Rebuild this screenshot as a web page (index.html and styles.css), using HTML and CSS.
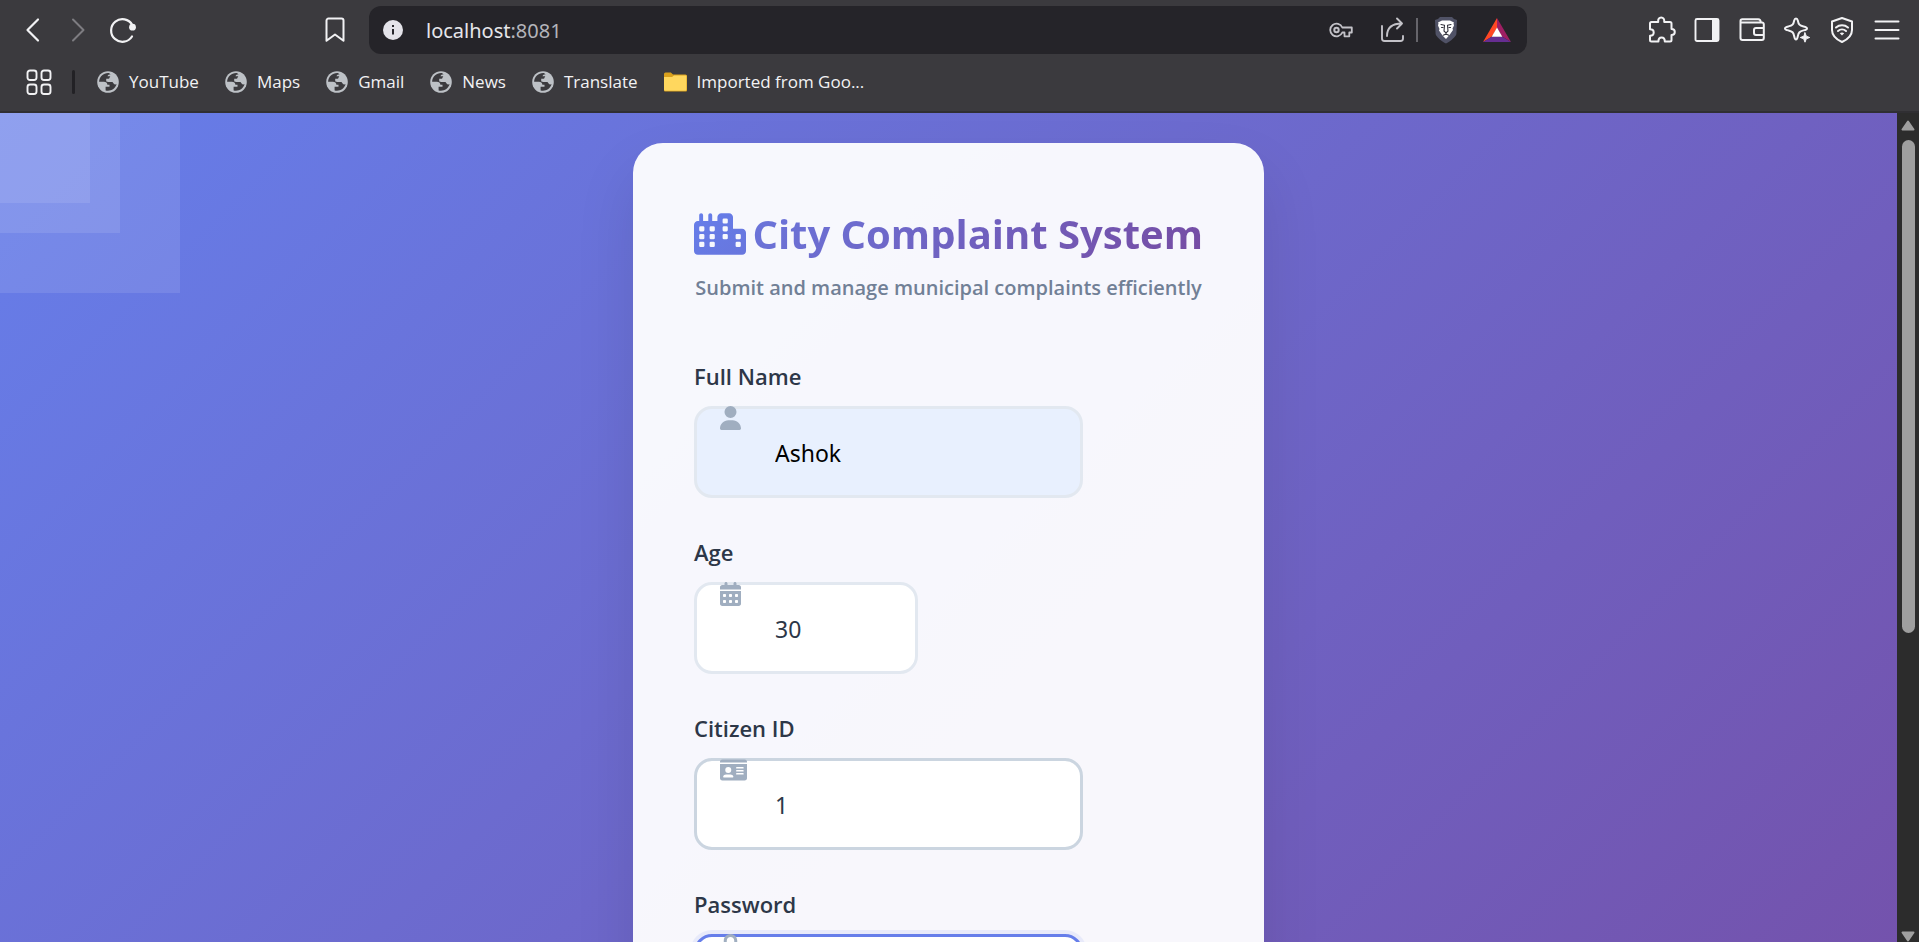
FILE: index.html
```
<!DOCTYPE html>
<html lang="en">
<head>
<meta charset="utf-8">
<meta name="viewport" content="width=device-width, initial-scale=1">
<title>City Complaint System</title>
<link rel="stylesheet" href="styles.css">
</head>
<body>
<svg class="defs" width="0" height="0" aria-hidden="true">
  <symbol id="globe" viewBox="0 0 22 22">
    <circle cx="11" cy="11" r="10.8" fill="#bdc1c6"/>
    <path d="M12 2.1C6.8 1.600 2.300 5.700 2.100 10.700l4.800.1c2 0 3.400 1 3.500 2.900l2.100.1v2H8.600v3.700c4.600 1.300 9.700-1.300 11-6.400-1 .6-2.300.5-2.900-.9-.4-1-1.300-1.300-2.500-1.300H10.400V8.100c1.300.1 2.100-.4 2.200-1.600.1-1.100 1-1.700 2.600-1.600z" fill="#3b3a3e"/>
    <path d="M10.500 5.200h2.800v1.200c0 .8-.6 1.400-1.500 1.400H9.200v2.700h5c1.500 0 2.300.8 2.400 2.100l3.100.6c.8-3.600-.7-7.400-4.200-9.500l-1.500-.5c-1.900-.1-3.300.6-3.500 2z" fill="#bdc1c6"/>
  </symbol>
</svg>
<header class="browser">
  <div class="toolbar">
    <nav class="group" aria-label="Navigation">
      <button class="tool" aria-label="Back"><svg width="26" height="26" viewBox="0 0 26 26"><path d="M18 2.500 7.500 13 18 23.500" stroke-width="2.200"/></svg></button>
      <button class="tool dim" aria-label="Forward"><svg width="26" height="26" viewBox="0 0 26 26"><path d="M8 2.500 18.500 13 8 23.500" stroke-width="2"/></svg></button>
      <button class="tool" aria-label="Reload"><svg width="28" height="28" viewBox="0 0 28 28"><path d="M23 20.500A11.300 11.300 0 1 1 23.300 9" stroke-width="2.200"/><circle cx="23.500" cy="11.200" r="3.400" fill="#f2f2f4" stroke="none"/></svg></button>
    </nav>
    <div class="location">
      <button class="tool" aria-label="Bookmark this page"><svg width="24" height="28" viewBox="0 0 24 28"><path d="M5.500 2.500h13a2 2 0 0 1 2 2v20.300L12 18.500l-8.500 6.300V4.500a2 2 0 0 1 2-2z" stroke-width="2"/></svg></button>
      <div class="url">
        <svg width="20" height="20" viewBox="0 0 20 20" aria-hidden="true"><circle cx="10" cy="10" r="10" fill="#e4e3e9"/><path d="M10 9v5.500M10 5v2" stroke="#27262b" stroke-width="2"/></svg>
        <span class="address">localhost<span class="port">:8081</span></span>
        <button class="tool soft" aria-label="Passwords"><svg width="24" height="18" viewBox="0 0 24 18"><path d="M13.300 6.500a6.300 6.300 0 1 0 0 5h2.200v3.800h4.800v-3.800h2.500v-5z" stroke-width="1.800"/><circle cx="7.500" cy="9" r="2.200" stroke-width="2"/></svg></button>
        <button class="tool soft share" aria-label="Share"><svg width="24" height="26" viewBox="0 0 24 26"><path d="M2 9v12.500a2.500 2.500 0 0 0 2.500 2.500h16a2.500 2.500 0 0 0 2.500-2.500V19M7 19c0-8 5-12.500 15-12.500M17 1.500l5 5-5 5" stroke-width="1.900"/></svg></button>
        <span class="bar"></span>
        <button class="tool" aria-label="Shields"><svg width="24" height="28" viewBox="0 0 24 28"><path d="M6 1h12l2 2 3 1-.6 14c-.4 2-5 7-10.400 9.500C6.600 25 2 20 1.600 18L1 4l3-1z" fill="#505266" stroke="none"/><path d="M8 4.500h8l4 2-.5 1 .5 2-1.500 3 .5 1.500-3.500 5L12 23l-3.500-3.500-3.500-5 .5-1.500L4 9.500l.5-2-.5-1z" fill="#fff" stroke="none"/><path d="M7 8.500l3.500.8L10 15l2 1.800 2-1.800-.5-5.700 3.500-.8M12 17v1.500M7.500 11.500h1.500M16.500 11.500H15M9.200 19.200l2.800-1.200 2.800 1.200" stroke="#34343e" stroke-width="1.100"/></svg></button>
        <button class="tool rewards" aria-label="Rewards"><svg width="28" height="24" viewBox="0 0 28 24"><path d="M14 0 0 24l9-5.500 5-8.500z" fill="#ff4724" stroke="none"/><path d="m14 0 14 24-9-5.500L14 10z" fill="#9e1f63" stroke="none"/><path d="M0 24h28l-9-5.500H9z" fill="#662d91" stroke="none"/><path d="m14 9.500 5.300 9.200H8.700z" fill="#fff" stroke="none"/></svg></button>
      </div>
    </div>
    <div class="group">
      <button class="tool" aria-label="Extensions"><svg width="28" height="28" viewBox="0 0 28 28"><path d="M3.500 6h6.700c-.4-3 1-4.500 3-4.500s3.400 1.500 3 4.500H22a1.500 1.500 0 0 1 1.500 1.500v5.600c2.200 0 3.300 1.200 3.300 2.900s-1.100 2.900-3.300 2.900V24a1.500 1.500 0 0 1-1.500 1.500h-5.200c0-2.600-1.200-4-3.200-4s-3.200 1.400-3.200 4H3.500A1.500 1.500 0 0 1 2 24v-4.300c2.400 0 3.700-1.200 3.700-3.200S4.400 13.300 2 13.300V7.500A1.500 1.500 0 0 1 3.500 6z" stroke-width="2"/></svg></button>
      <button class="tool" aria-label="Sidebar"><svg width="26" height="26" viewBox="0 0 26 26"><rect x="1.500" y="2" width="23" height="22" rx="1.500" stroke-width="1.900"/><path d="M18 2h7v22h-7z" fill="#f2f2f4" stroke="none"/></svg></button>
      <button class="tool" aria-label="Wallet"><svg width="28" height="26" viewBox="0 0 28 26"><path d="M2.500 5.500V4A1.800 1.800 0 0 1 4.300 2.200H20A2.500 2.500 0 0 1 22.500 5.500M2.500 5.500H24A1.800 1.800 0 0 1 25.800 7.300V21A2 2 0 0 1 23.800 23H4.500A2 2 0 0 1 2.500 21zM25.800 11H18a2 2 0 0 0-2 2v3a2 2 0 0 0 2 2h7.800" stroke-width="2"/></svg></button>
      <button class="tool" aria-label="Assistant"><svg width="28" height="28" viewBox="0 0 28 28"><path d="M13 2.500c1.100 0 1.500.8 1.800 2 .8 4 1.700 5 5.700 5.900 1.700.4 3.500.8 3.500 2s-1.800 1.600-3.500 2c-4 .9-4.900 1.900-5.700 5.900-.3 1.500-.7 3.200-1.800 3.200s-1.500-1.700-1.800-3.200c-.8-4-1.700-5-5.700-5.900-1.700-.4-3.500-.8-3.500-2s1.800-1.600 3.500-2c4-.9 4.900-1.900 5.700-5.900.3-1.200.7-2 1.800-2z" stroke-width="2"/><path d="M22 16.800l1.300 3.400 3.400 1.300-3.400 1.300L22 26.200l-1.300-3.400-3.400-1.300 3.400-1.300z" fill="#f2f2f4" stroke-width="1"/></svg></button>
      <button class="tool" aria-label="VPN"><svg width="24" height="28" viewBox="0 0 24 28"><path d="M12 2 22 5.500V14c0 5-4.500 9.500-10 12C6.500 23.500 2 19 2 14V5.500z" stroke-width="2"/><path d="M6 11.500c3.500-3 8.500-3 12 0M8 15c2.300-2 5.700-2 8 0" stroke-width="2"/><path d="m9.800 17.200 2.200 2.400 2.200-2.400c-1.400-1-3-1-4.400 0z" fill="#f2f2f4" stroke="none"/></svg></button>
      <button class="tool" aria-label="Menu"><svg width="26" height="26" viewBox="0 0 26 26"><path d="M1.500 4.500h23M1.500 13h23M1.500 21.500h23" stroke-width="2"/></svg></button>
    </div>
  </div>
  <nav class="bookmarks" aria-label="Bookmarks">
    <button class="tool apps" aria-label="Apps"><svg width="26" height="26" viewBox="0 0 26 26"><rect x="1.500" y="1.500" width="9" height="9.500" rx="2.500" stroke-width="1.900"/><rect x="15.500" y="1.500" width="9" height="9.500" rx="2.500" stroke-width="1.900"/><rect x="1.500" y="15.500" width="9" height="9.500" rx="2.500" stroke-width="1.900"/><rect x="15.500" y="15.500" width="9" height="9.500" rx="2.500" stroke-width="1.900"/></svg></button>
    <span class="split"></span>
    <a href="#"><svg width="22" height="22"><use href="#globe"/></svg>YouTube</a>
    <a href="#"><svg width="22" height="22"><use href="#globe"/></svg>Maps</a>
    <a href="#"><svg width="22" height="22"><use href="#globe"/></svg>Gmail</a>
    <a href="#"><svg width="22" height="22"><use href="#globe"/></svg>News</a>
    <a href="#"><svg width="22" height="22"><use href="#globe"/></svg>Translate</a>
    <a href="#"><svg width="23" height="20" viewBox="0 0 23 20"><path d="M0 2a1.500 1.500 0 0 1 1.500-1.500h5.300L9 2.500h12.500A1.500 1.500 0 0 1 23 4v14.500a1 1 0 0 1-1 1H1a1 1 0 0 1-1-1z" fill="#d9a01c"/><path d="M0 5h8l2-1.500h12.500V17.500a1.200 1.200 0 0 1-1.200 1.200H1.200A1.200 1.200 0 0 1 0 17.500z" fill="#ffd75e"/></svg>Imported from Goo...</a>
  </nav>
</header>

<div class="viewport">
  <main class="page">
    <div class="shade large"></div>
    <div class="shade medium"></div>
    <div class="shade small"></div>
    <section class="card">
      <h1>
        <svg width="52" height="42" viewBox="0 0 640 512" aria-hidden="true"><defs><linearGradient id="city" x1="0" y1="0" x2="1" y2="1"><stop offset="0" stop-color="#667eea"/><stop offset="1" stop-color="#6876dd"/></linearGradient></defs><path fill="url(#city)" fill-rule="evenodd" d="M480 48c0-26.500-21.500-48-48-48H336c-26.500 0-48 21.500-48 48V96H224V24c0-13.300-10.700-24-24-24s-24 10.700-24 24V96H112V24c0-13.300-10.700-24-24-24S64 10.700 64 24V96H48C21.500 96 0 117.500 0 144V464c0 26.500 21.500 48 48 48H592c26.500 0 48-21.500 48-48V240c0-26.500-21.500-48-48-48H480zM80 160h32q16 0 16 16v32q0 16-16 16H80q-16 0-16-16v-32q0-16 16-16zm0 96h32q16 0 16 16v32q0 16-16 16H80q-16 0-16-16v-32q0-16 16-16zm0 96h32q16 0 16 16v32q0 16-16 16H80q-16 0-16-16v-32q0-16 16-16zM208 160h32q16 0 16 16v32q0 16-16 16h-32q-16 0-16-16v-32q0-16 16-16zm0 96h32q16 0 16 16v32q0 16-16 16h-32q-16 0-16-16v-32q0-16 16-16zm0 96h32q16 0 16 16v32q0 16-16 16h-32q-16 0-16-16v-32q0-16 16-16zM368 64h32q16 0 16 16v32q0 16-16 16h-32q-16 0-16-16V80q0-16 16-16zm0 96h32q16 0 16 16v32q0 16-16 16h-32q-16 0-16-16v-32q0-16 16-16zm0 96h32q16 0 16 16v32q0 16-16 16h-32q-16 0-16-16v-32q0-16 16-16zM528 256h32q16 0 16 16v32q0 16-16 16h-32q-16 0-16-16v-32q0-16 16-16zm0 96h32q16 0 16 16v32q0 16-16 16h-32q-16 0-16-16v-32q0-16 16-16z"/></svg>
        <span class="title">City Complaint System</span>
      </h1>
      <p class="tagline">Submit and manage municipal complaints efficiently</p>
      <form>
        <div class="field">
          <label for="name">Full Name</label>
          <div class="control">
            <input class="filled" id="name" type="text" value="Ashok">
            <svg class="mark" height="24" viewBox="0 0 448 512" aria-hidden="true"><path d="M224 256A128 128 0 1 0 224 0a128 128 0 1 0 0 256zm-45.700 48C79.800 304 0 383.800 0 482.300C0 498.700 13.300 512 29.700 512H418.300c16.400 0 29.700-13.300 29.700-29.700C448 383.800 368.200 304 269.700 304H178.300z"/></svg>
          </div>
        </div>
        <div class="field">
          <label for="age">Age</label>
          <div class="control short">
            <input id="age" type="text" inputmode="numeric" value="30">
            <svg class="mark" height="24" viewBox="0 0 448 512" aria-hidden="true"><path d="M128 0c17.700 0 32 14.300 32 32V64H288V32c0-17.700 14.300-32 32-32s32 14.300 32 32V64h48c26.500 0 48 21.500 48 48v48H0V112C0 85.500 21.500 64 48 64H96V32c0-17.700 14.300-32 32-32zM0 192H448V464c0 26.500-21.500 48-48 48H48c-26.500 0-48-21.500-48-48V192zm64 80v32c0 8.800 7.200 16 16 16h32c8.800 0 16-7.200 16-16V272c0-8.800-7.200-16-16-16H80c-8.800 0-16 7.200-16 16zm128 0v32c0 8.800 7.200 16 16 16h32c8.800 0 16-7.200 16-16V272c0-8.800-7.200-16-16-16H208c-8.800 0-16 7.200-16 16zm144-16c-8.800 0-16 7.200-16 16v32c0 8.800 7.200 16 16 16h32c8.800 0 16-7.200 16-16V272c0-8.800-7.200-16-16-16H336zM64 400v32c0 8.800 7.200 16 16 16h32c8.800 0 16-7.200 16-16V400c0-8.800-7.200-16-16-16H80c-8.800 0-16 7.200-16 16zm144-16c-8.800 0-16 7.200-16 16v32c0 8.800 7.200 16 16 16h32c8.800 0 16-7.200 16-16V400c0-8.800-7.200-16-16-16H208zm112 16v32c0 8.800 7.200 16 16 16h32c8.800 0 16-7.200 16-16V400c0-8.800-7.200-16-16-16H336c-8.800 0-16 7.200-16 16z"/></svg>
          </div>
        </div>
        <div class="field">
          <label for="citizen">Citizen ID</label>
          <div class="control">
            <input class="hovered" id="citizen" type="text" value="1">
            <svg class="mark" height="24" viewBox="0 0 576 512" aria-hidden="true"><path fill-rule="evenodd" d="M528 32H48C21.500 32 0 53.500 0 80v16h576V80c0-26.500-21.500-48-48-48zM0 128v304c0 26.500 21.500 48 48 48h480c26.500 0 48-21.500 48-48V128zm176 64a64 64 0 1 1 0 128 64 64 0 0 1 0-128zM80 416c-8 0-16-8-14-18 6-30 34-46 62-46h96c28 0 56 16 62 46 2 10-6 18-14 18zM352 192h144q8 0 8 8v16q0 8-8 8H352q-8 0-8-8v-16q0-8 8-8zm0 64h144q8 0 8 8v16q0 8-8 8H352q-8 0-8-8v-16q0-8 8-8zm0 64h144q8 0 8 8v16q0 8-8 8H352q-8 0-8-8v-16q0-8 8-8z"/></svg>
          </div>
        </div>
        <div class="field">
          <label for="password">Password</label>
          <div class="control">
            <input class="focused" id="password" type="password">
            <svg class="mark" height="24" viewBox="0 0 448 512" aria-hidden="true"><path d="M144 144v48H304V144c0-44.200-35.800-80-80-80s-80 35.800-80 80zM80 192V144C80 64.500 144.500 0 224 0s144 64.500 144 144v48h16c35.300 0 64 28.700 64 64V448c0 35.300-28.700 64-64 64H64c-35.300 0-64-28.700-64-64V256c0-35.300 28.700-64 64-64H80z"/></svg>
          </div>
        </div>
      </form>
    </section>
  </main>
  <div class="scrollbar" aria-hidden="true">
    <svg width="14" height="11" viewBox="0 0 14 11"><path d="M7 1.500 1.500 9.500h11z"/></svg>
    <div class="track"><div class="thumb"></div></div>
    <svg width="14" height="11" viewBox="0 0 14 11"><path d="M7 9.500 1.500 1.500h11z"/></svg>
  </div>
</div>
</body>
</html>
```

FILE: styles.css
```
* { box-sizing: border-box; }

body {
  margin: 0;
  height: 100vh;
  display: flex;
  flex-direction: column;
  overflow: hidden;
  font-family: "Open Sans", "Noto Sans", sans-serif;
}

.defs { position: absolute; }

button {
  border: 0;
  padding: 0;
  background: none;
}

/* Browser bar */
.browser {
  flex: none;
  background: #3b3a3e;
  border-bottom: 2px solid #302f33;
}

.toolbar {
  display: flex;
  align-items: center;
  padding: 6px 10px;
}

.group { display: flex; }

.tool {
  flex: none;
  width: 45px;
  height: 48px;
  display: flex;
  align-items: center;
  justify-content: center;
}

.tool svg {
  fill: none;
  stroke: #f2f2f4;
  stroke-linecap: round;
  stroke-linejoin: round;
}

.tool.dim svg { stroke: #7d7c81; }
.tool.soft svg { stroke: #c3c2c8; }

.location {
  flex: 1;
  display: flex;
  gap: 12px;
  margin: 0 112px 0 167px;
}

.url {
  flex: 1;
  height: 48px;
  display: flex;
  align-items: center;
  padding: 0 8px 0 14px;
  border-radius: 12px;
  background: #252429;
}

.address {
  flex: 1;
  margin-left: 23px;
  color: #e6e6ea;
  font-family: "Noto Sans", sans-serif;
  font-size: 20px;
}

.port { color: #b4b4ba; }

.tool.share { margin-left: 6px; }

.bar {
  width: 2px;
  height: 24px;
  margin: 0 5px 0 2px;
  background: #66656b;
}

.tool.rewards { margin-left: 6px; }

.bookmarks {
  display: flex;
  align-items: center;
  gap: 26px;
  height: 51px;
  padding: 0 24px 8px 26px;
  font-size: 17px;
}

.tool.apps {
  width: 26px;
  margin-right: -6px;
}

.split {
  width: 3px;
  height: 24px;
  margin-right: -4px;
  border-radius: 2px;
  background: #222125;
}

.bookmarks a {
  display: flex;
  align-items: center;
  gap: 10px;
  color: #f2f2f4;
  text-decoration: none;
  white-space: nowrap;
}

/* Page area */
.viewport {
  flex: 1;
  min-height: 0;
  display: grid;
  grid-template-columns: 1fr 22px;
}

.page {
  position: relative;
  min-height: 0;
  overflow: hidden;
  padding: 30px;
  background: linear-gradient(135deg, #667eea 0%, #764ba2 100%) top left / 100% 157% no-repeat;
}

.shade {
  position: absolute;
  top: 0;
  left: 0;
  background: rgba(255, 255, 255, 0.1);
}

.large { width: 180px; height: 180px; }
.medium { width: 120px; height: 120px; }
.small { width: 90px; height: 90px; }

.card {
  position: relative;
  max-width: 631px;
  margin: 0 auto;
  padding: 61px;
  border-radius: 30px;
  background: rgba(255, 255, 255, 0.95);
  box-shadow: 0 30px 60px rgba(0, 0, 0, 0.1);
}

h1 {
  display: flex;
  align-items: center;
  justify-content: space-between;
  margin: 0;
  line-height: 60px;
  font-size: 40px;
  font-weight: 700;
  white-space: nowrap;
}

h1 svg { flex: none; }

.title {
  background: linear-gradient(135deg, #6a76dc, #764ba2);
  background-clip: text;
  -webkit-background-clip: text;
  color: transparent;
}

.tagline {
  margin: 8px 0 0;
  color: #718096;
  font-size: 20px;
  font-weight: 600;
  line-height: 32px;
  text-align: center;
  white-space: nowrap;
}

form {
  display: grid;
  gap: 38px;
  margin-top: 56px;
}

.field {
  display: grid;
  gap: 14px;
}

label {
  color: #2d3748;
  font-size: 22px;
  font-weight: 600;
  line-height: 32px;
}

.control {
  position: relative;
  max-width: 389px;
}

.control.short { max-width: 224px; }

.control input {
  display: block;
  width: 100%;
  height: 92px;
  padding: 2px 30px 0 78px;
  border: 3px solid #e2e8f0;
  border-radius: 18px;
  outline: 0;
  background: #fff;
  color: #2d3748;
  font-family: "Noto Sans", sans-serif;
  font-size: 23px;
}

.control input.filled {
  background: #e8f0fe;
  color: #000;
}

.control input.hovered { border-color: #cbd5e0; }

.control input.focused {
  border-color: #667eea;
  box-shadow: 0 0 0 4px rgba(102, 126, 234, 0.1);
}

.mark {
  position: absolute;
  top: 0;
  left: 26px;
  fill: #a0aec0;
}

/* Scrollbar */
.scrollbar {
  display: flex;
  flex-direction: column;
  align-items: center;
  gap: 9px;
  padding-top: 7px;
  background: #2c2c2c;
}

.scrollbar svg {
  flex: none;
  fill: #9f9f9f;
  stroke: #9f9f9f;
  stroke-width: 2;
  stroke-linejoin: round;
}

.track {
  flex: 1;
  width: 13px;
}

.thumb {
  height: 63%;
  border-radius: 7px;
  background: #9f9f9f;
}
```
